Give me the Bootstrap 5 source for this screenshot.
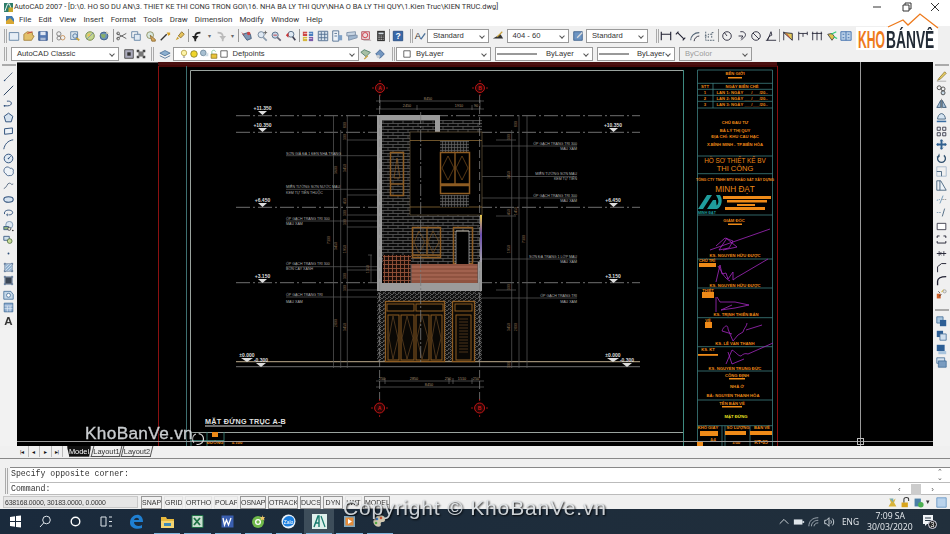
<!DOCTYPE html>
<html lang="vi"><head><meta charset="utf-8"><title>AutoCAD 2007</title>
<link rel="stylesheet" href="https://cdn.jsdelivr.net/npm/bootstrap@5.3.0/dist/css/bootstrap.min.css">
<style>
html,body{margin:0;height:534px;width:950px;overflow:hidden;background:#f0f0f0}
.acad{width:950px;height:534px;position:relative;font-family:Roboto,"Open Sans",sans-serif;color:#222;filter:blur(.4px);overflow:hidden}
.ttl{height:14px;background:#fff;font-size:7.4px;line-height:14px;white-space:nowrap;color:#333}
.ttl svg{width:9px;height:9px;margin:0 1px 0 4px;flex:none}
.wctl{margin-left:auto;display:flex}
.wctl svg{width:29px;height:14px;margin:0}
.mnu{height:12px;background:#fff;font-size:7.9px;line-height:12px;color:#333}
.mnu svg{width:10px;height:10px;margin:0 4px 0 5px;flex:none}
.mnu span{margin-right:7.2px}
.tb1{height:19px;background:#f0f0f0;padding-left:4px;white-space:nowrap}
.tb2{height:17px;background:#f0f0f0;padding-left:4px;white-space:nowrap}
.grp{width:3px;height:14px;border-left:1px solid #aaa;border-right:1px solid #aaa;flex:none}
.sepv{width:1px;height:13px;background:#999;margin:0 1px;flex:none}
.tbi{width:14.5px;height:14px;flex:none;display:flex;align-items:center;justify-content:center}
.tbi svg{width:12px;height:12px}
.tn{width:12px}
.tdd{width:9px;flex:none;font-size:6px;text-align:center;color:#666}
.cbo{height:14px;border:1px solid #9a9a9a;background:#fff;font:7.6px/12px "Liberation Sans",sans-serif;padding-left:5px;display:flex;align-items:center;flex:none;position:relative;white-space:nowrap;overflow:hidden;color:#333}
.cbo::after{content:"";position:absolute;right:4px;top:4px;width:4px;height:4px;border-right:1px solid #555;border-bottom:1px solid #555;transform:rotate(45deg)}
.cbo.off{background:#f0f0f0;color:#9a9a9a}
.cbo svg{width:10px;height:10px;flex:none}
.cb-a{width:62px}.cb-b{width:62px}.cb-c{width:62px}.cb-d{width:108px}.cb-e{width:186px}.cb-f{width:95px;margin-left:1.500px}.cb-g{width:98px;padding-left:1px}.cb-h{width:78px;padding-left:1px}.cb-i{width:73px}
.cbo svg.lnk{width:40px;margin-right:9px}.cbo svg.lnk2{width:30px;margin-right:8px}
.tb1 .cbo+.tbi{margin-left:2px;margin-right:1px}
.main{height:384px}
.side{width:17px;flex:none;background:#f2f2f2;position:relative}
.side .tbs{background:#f0f0f0;display:flex;flex-direction:column;align-items:center}
.side .tbi{height:13.6px;width:16px}
.side svg{width:11px;height:11px}
.atext{font:700 11.5px/13.6px "Liberation Sans",sans-serif;color:#333}
.gripH{height:2px;width:14px;border-top:1px solid #aaa;border-bottom:1px solid #aaa;margin:2px 0 4px;flex:none}
.cvs{width:916px;flex:none;background:#000;display:block}
.tabsr{height:12px;background:#f0f0f0;padding-left:17px}
.navb{width:11.500px;height:11px;font-size:6px;line-height:11px;text-align:center;color:#111;border-right:1px solid #bbb;flex:none}
.tabz{font:7.400px/11px "Liberation Sans",sans-serif;position:relative;text-align:center;flex:none;height:11px;color:#333;z-index:0}
.tabz::before{content:"";position:absolute;inset:0;border:1px solid #555;border-top:0;transform:skewX(-14deg);z-index:-1}
.tabz.on{color:#fff}
.tabz.on::before{background:#111;transform:none;clip-path:polygon(0 0,100% 0,92% 100%,10% 100%)}
.tab-m{width:24px;margin-right:1px}.tab-l{width:29px;margin-right:1px}.tab-l2{width:30px}
.gapr{height:9px;background:#f0f0f0;border-top:1px solid #888;position:relative}
.gapr::before{content:"";display:block;height:2px;background:#f0f0f0}
.cmdr{height:28px;background:#f0f0f0}
.cmdg{width:10px;flex:none;position:relative}
.cmdg::before{content:"";position:absolute;left:5px;top:1px;bottom:1px;width:3px;border-left:1px solid #aaa;border-right:1px solid #aaa}
.cmdw{flex:1;background:#fff;border-top:1px solid #888;border-bottom:1px solid #bbb;font:8.200px/12px "Liberation Mono",monospace;color:#333}
.cmdl{height:13.500px;padding-left:1px;position:relative;white-space:pre}
.cmdl+.cmdl{border-top:1px solid #bbb}
.scv{position:absolute;right:6px;top:1px;width:9px;font:7px/6px "Liberation Sans";color:#555;text-align:center}
.sch{position:absolute;right:16px;top:1px;width:36px;height:11px;display:flex;justify-content:space-between;font:8px/11px "Liberation Sans";color:#555}
.sch b{width:10px;height:11px;background:#ccc;display:block}
.stb{height:14px;background:#f0f0f0;font:7px/12px "Liberation Sans",sans-serif;padding-left:3px;color:#333}
.crd{width:135px;height:12px;background:#e6e6e6;border:1px solid #c8c8c8;padding-left:1px;flex:none;margin-right:3px;white-space:nowrap;overflow:hidden;font-size:6.900px;letter-spacing:-.15px}
.sbt{height:13px;border:1px solid #999;text-align:center;flex:none;margin-right:2px;overflow:hidden;white-space:nowrap}
.sbt.up{border-color:#e4e4e4}
.s1{width:21px}.s2{width:19px}.s3{width:27px}.s4{width:24px}.s5{width:26px}.s6{width:30px}.s7{width:21px}.s8{width:20px}.s9{width:17px}.s10{width:26px}
.tray{margin-left:auto;margin-right:3px;gap:2px}
.tray svg{width:11px;height:11px;flex:none}
.ddn{font-size:7px;color:#333}
.tskb{height:25px;background:linear-gradient(90deg,#1a2a3c,#1d2c3b 50%,#212f3c);color:#e7ebef;position:relative}
.tski{width:30.400px;height:25px;flex:none;display:flex;align-items:center;justify-content:center;position:relative}
.tski svg{width:15px;height:15px}
.tski.run::after{content:"";position:absolute;left:2px;right:2px;bottom:0;height:1.500px;background:#7fb6dd}
.tski.act{background:#3d4d5a}
.clk{font:8.600px/10.500px "Open Sans",sans-serif;text-align:right;width:42px;margin-right:12px;flex:none}
.try{font:8.400px/25px "Open Sans",sans-serif;flex:none}
.try svg{width:12px;height:12px;margin-right:3px}
.ntf{margin-right:12px}
.lgo{position:absolute;left:855px;top:12px;width:85px;height:39px}
.wm1,.wm2{position:absolute;color:#dfe3e6;white-space:nowrap;font-family:"Liberation Sans",sans-serif;text-shadow:1px 1px 2px #000;opacity:.9}
.wm1{left:85px;top:421px;font-size:17.200px;line-height:24px;letter-spacing:.35px;-webkit-text-stroke:.3px #dfe3e6}
.wm2{left:343px;top:496px;font-size:21px;line-height:24px;letter-spacing:.85px}
svg text{font-family:"Liberation Sans",sans-serif}
</style></head><body>
<svg width="0" height="0" class="position-absolute">
<defs>
<symbol id="nw" viewBox="0 0 14 14"><path d="M1.5 3h11v9h-11z" fill="#e6eef6" stroke="#5b7da0"/></symbol>
<symbol id="op" viewBox="0 0 14 14"><path d="M1 12V5l4-3 6 1v3l2 1-3 5z" fill="#e2c06a" stroke="#a4813a"/><path d="M5 4l6-2" stroke="#c33"/></symbol>
<symbol id="sv" viewBox="0 0 14 14"><path d="M2 2h10v10H2z" fill="#5579b2" stroke="#2f4f86"/><path d="M4 2h6v4H4z" fill="#dfe6f2"/><path d="M4 9h6v3H4z" fill="#a9b9d4"/></symbol>
<symbol id="pr" viewBox="0 0 14 14"><circle cx="4.5" cy="4.5" r="2.5" fill="none" stroke="#777"/><circle cx="9" cy="9" r="2.6" fill="none" stroke="#c28b52"/><circle cx="4.5" cy="9.5" r="2.2" fill="none" stroke="#777"/></symbol>
<symbol id="pv" viewBox="0 0 14 14"><path d="M2 2h8v9H2z" fill="#dfe8f0" stroke="#5b7da0"/><path d="M7 8l5 4" stroke="#c9a23a" stroke-width="2"/><circle cx="7" cy="7" r="2.6" fill="#cfe2f3" stroke="#4a6f96"/></symbol>
<symbol id="pl" viewBox="0 0 14 14"><circle cx="7" cy="7" r="5" fill="#c3d68e" stroke="#6f8240"/><circle cx="6" cy="6" r="2" fill="#e8c35c"/><path d="M3 11l8-8" stroke="#7d94b4"/></symbol>
<symbol id="gb" viewBox="0 0 14 14"><circle cx="7" cy="7" r="4.6" fill="#6c92b8" stroke="#3a5b80"/><path d="M3 5h6l-1 4H5z" fill="#8ab066"/><path d="M9 1l4 3-3 1z" fill="#d7d3bb"/></symbol>
<symbol id="ct" viewBox="0 0 14 14"><path d="M1 4l11 6M1 10l11-6" stroke="#555"/><circle cx="2.5" cy="4" r="1.6" fill="none" stroke="#555"/><circle cx="2.5" cy="10" r="1.6" fill="none" stroke="#555"/></symbol>
<symbol id="cp" viewBox="0 0 14 14"><path d="M2 2h7v7H2z" fill="#f7f7f7" stroke="#5b7da0"/><path d="M5 5h7v7H5z" fill="#dfe9f3" stroke="#5b7da0"/></symbol>
<symbol id="ps" viewBox="0 0 14 14"><circle cx="6" cy="6" r="4" fill="#d8e8e0" stroke="#8b8b5a"/><path d="M6 6l6 5v2H8z" fill="#d6a85c" stroke="#8f6d33"/></symbol>
<symbol id="mp" viewBox="0 0 14 14"><path d="M2 12L9 5" stroke="#333" stroke-width="1.6"/><path d="M9 3h4v2l-2 2z" fill="#d8a028"/></symbol>
<symbol id="br" viewBox="0 0 14 14"><path d="M2 12l4-2-2-2z" fill="#caa02e"/><path d="M5 7l4-5 3 3-4 4z" fill="#e5c35c" stroke="#8c6e2a"/></symbol>
<symbol id="un" viewBox="0 0 14 14"><path d="M5 13V7c0-3 3-4 6-4" fill="none" stroke="#222" stroke-width="2"/><path d="M1 7h8l-4 5z" fill="#222"/></symbol>
<symbol id="re" viewBox="0 0 14 14"><path d="M9 13V7C9 4 6 3 3 3" fill="none" stroke="#bbb" stroke-width="2"/><path d="M13 7H5l4 5z" fill="#bbb"/></symbol>
<symbol id="pn" viewBox="0 0 14 14"><path d="M2 5l5 7 5-2-1-5-3-2z" fill="#8098b5" stroke="#3e5674"/><circle cx="9" cy="4" r="2" fill="#c44"/><path d="M1 3l3 3" stroke="#c44"/></symbol>
<symbol id="zm" viewBox="0 0 14 14"><circle cx="6" cy="5.5" r="3.6" fill="#dfe9f3" stroke="#6a7f96"/><path d="M8.5 8.5l4 4" stroke="#8a9bad" stroke-width="2"/><path d="M11 1v4M9 3h4" stroke="#666"/></symbol>
<symbol id="zw" viewBox="0 0 14 14"><circle cx="6" cy="6" r="3.6" fill="#c7d7e8" stroke="#4f6680"/><path d="M8.5 8.5l4 4" stroke="#667" stroke-width="2"/><path d="M4 6h4" stroke="#c33"/></symbol>
<symbol id="zp" viewBox="0 0 14 14"><circle cx="7" cy="5" r="3.4" fill="#dfe9f3" stroke="#4f6680"/><path d="M9 8l3 4" stroke="#445" stroke-width="2"/><path d="M1 6l3-3v6z" fill="#c33"/></symbol>
<symbol id="pp" viewBox="0 0 14 14"><path d="M1 2h5v5H1z" fill="#c44"/><path d="M8 2h5v5H8z" fill="#4a7fbf"/><path d="M1 8h5v5H1z" fill="#d5b63b"/><path d="M8 8h5v5H8z" fill="#7a5aa8"/><path d="M2 4h10M2 10h10" stroke="#fff" stroke-width=".7"/></symbol>
<symbol id="dc" viewBox="0 0 14 14"><path d="M1.5 1.5h11v11h-11z" fill="#d9e4ef" stroke="#4d6b8c"/><path d="M5 2v10M9 2v10M2 5h10M2 9h10" stroke="#4d6b8c"/></symbol>
<symbol id="tp" viewBox="0 0 14 14"><path d="M2 1h7v12H2z" fill="#eef3f8" stroke="#4d6b8c"/><path d="M4 4h3M4 7h3" stroke="#4d6b8c"/><path d="M8 6h5v6H8z" fill="#7fa1c6"/></symbol>
<symbol id="sh" viewBox="0 0 14 14"><path d="M1 3l10-1v4L1 7z" fill="#c7d4e2" stroke="#7a8ea6"/><path d="M3 7l10-1v3L3 12z" fill="#9fb6cf" stroke="#7a8ea6"/></symbol>
<symbol id="mk" viewBox="0 0 14 14"><path d="M2 2h9v9H2z" fill="#eadadd" stroke="#b24a55"/><circle cx="6" cy="6" r="3" fill="none" stroke="#d02c38"/><path d="M4 12h9" stroke="#b4a7ab"/></symbol>
<symbol id="ca" viewBox="0 0 14 14"><path d="M2.5 1h9v12h-9z" fill="#333"/><path d="M4 3h6v2H4z" fill="#cfd8df"/><path d="M4 7h1.5M6.5 7H8M9 7h1M4 9h1.5M6.5 9H8M9 9h1M4 11h1.500M6.5 11H8M9 11h1" stroke="#ddd"/></symbol>
<symbol id="hp" viewBox="0 0 14 14"><path d="M1.500 1.500h11v11h-11z" fill="#3868a8" stroke="#254a80"/><text x="7" y="11" text-anchor="middle" font-size="10" font-weight="700" fill="#fff">?</text></symbol>
<symbol id="ts" viewBox="0 0 14 14"><text x="1" y="11" font-size="11" fill="#333" font-family="Liberation Serif">A</text><path d="M8 11l5-7" stroke="#4a6f96" stroke-width="1.5"/></symbol>
<symbol id="ds" viewBox="0 0 14 14"><path d="M1 10h12L10 5z" fill="#333"/><path d="M6 8l6-6" stroke="#c9a23a" stroke-width="1.400"/></symbol>
<symbol id="dd" viewBox="0 0 14 14"><path d="M2 2h10v10H2z" fill="#6d95c3" stroke="#3c5f8a"/><path d="M6 9l6-6" stroke="#ddd" stroke-width="1.500"/></symbol>
<symbol id="d1" viewBox="0 0 14 14"><path d="M1.500 2v10M12.500 2v10M1.500 5h11" fill="none" stroke="#223" stroke-width="1.300"/></symbol>
<symbol id="d2" viewBox="0 0 14 14"><path d="M1 5l3-3M9 12l3-3M3 3l7 7" fill="none" stroke="#223" stroke-width="1.300"/></symbol>
<symbol id="d3" viewBox="0 0 14 14"><path d="M2 12c0-5 4-9 10-9" fill="none" stroke="#567" stroke-width="1.300"/><path d="M6 13c0-3 3-6 6-6" fill="none" stroke="#223"/></symbol>
<symbol id="d4" viewBox="0 0 14 14"><path d="M2 2v10h10M5 9V5h3M9 9V3h3M1 7h3" fill="none" stroke="#456" stroke-dasharray="2 1"/></symbol>
<symbol id="d5" viewBox="0 0 14 14"><circle cx="7" cy="7" r="5" fill="none" stroke="#223"/><path d="M7 7L4 3" stroke="#223"/></symbol>
<symbol id="d6" viewBox="0 0 14 14"><path d="M5 2h3c3 1 4 4 2 6L6 12M3 7h5l-2 3" fill="none" stroke="#223"/></symbol>
<symbol id="d7" viewBox="0 0 14 14"><circle cx="7" cy="7" r="5" fill="none" stroke="#223"/><path d="M3.500 3.500l7 7" stroke="#223"/></symbol>
<symbol id="d8" viewBox="0 0 14 14"><path d="M1 12h12M3 12c0-3 2-5 5-6L7 2 3 12" fill="none" stroke="#223"/></symbol>
<symbol id="d9" viewBox="0 0 14 14"><path d="M2 2v10M2 3l10 1v8z" fill="#e2c85a" stroke="#223"/><path d="M5 4l4 5" stroke="#c33"/></symbol>
<symbol id="da" viewBox="0 0 14 14"><path d="M2 2v10M2 4h10M12 2v4M7 4v4" fill="none" stroke="#223"/></symbol>
<symbol id="db" viewBox="0 0 14 14"><path d="M2 2v10M7 2v10M12 2v10M1 4h12" fill="none" stroke="#223"/></symbol>
<symbol id="dq" viewBox="0 0 14 14"><path d="M2 5l5 7 3-4-3-4z" fill="#e2c14a" stroke="#444"/><path d="M6 5l6-3M9 8l4 2" stroke="#3c7" stroke-width="1.400"/></symbol>
<symbol id="dt" viewBox="0 0 14 14"><path d="M1 2h12v10H1z" fill="#bcd1e8" stroke="#3869a8"/><path d="M7 2v10M3 5h2M3 9h2M9 5h2M9 9h2" stroke="#3869a8"/></symbol>
<symbol id="lay" viewBox="0 0 14 14"><path d="M1 6l6-3 6 3-6 3z" fill="#8db0d0" stroke="#54769a"/><path d="M1 9l6 3 6-3" fill="none" stroke="#54769a"/></symbol>
<symbol id="bk" viewBox="0 0 14 14"><path d="M2 2h10v10H2z" fill="#aab" stroke="#444"/><path d="M5 5h4v4H5z" fill="#333"/></symbol>
<symbol id="bl" viewBox="0 0 14 14"><path d="M2 2h3v3H2zM9 2h3v3H9zM2 9h3v3H2zM9 9h3v3H9z" fill="#444"/><path d="M4 4h6v6H4z" fill="#777"/></symbol>
<symbol id="bulb" viewBox="0 0 14 14"><circle cx="7" cy="5.500" r="3.800" fill="#fdf3a6" stroke="#a99436"/><path d="M5.500 10h3v2.500h-3z" fill="#b7b7b7"/></symbol>
<symbol id="sun" viewBox="0 0 14 14"><circle cx="7" cy="7" r="4.600" fill="#f0d52b" stroke="#77701e"/></symbol>
<symbol id="frz" viewBox="0 0 14 14"><circle cx="6" cy="5.500" r="4" fill="#a7bfd1" stroke="#627f93"/><path d="M7 10h6V5" fill="#cfdde6"/></symbol>
<symbol id="lck" viewBox="0 0 14 14"><path d="M3 7h8v6H3z" fill="#e8c53a" stroke="#89701c"/><path d="M4 7V4c0-3 5-3 5 0" fill="none" stroke="#6b8"/></symbol>
<symbol id="sq" viewBox="0 0 14 14"><path d="M2.500 2.500h9v9h-9z" fill="#fff" stroke="#333"/></symbol>
<symbol id="lw" viewBox="0 0 14 14"><path d="M1 5l4-3 7 3-5 5z" fill="#a7c0a5" stroke="#4d7a67"/><path d="M5 13l4-4" stroke="#c9a23a" stroke-width="1.500"/></symbol>
<symbol id="lw2" viewBox="0 0 14 14"><path d="M2 7l5-5 5 5-5 5z" fill="#7396bf" stroke="#3e6090"/><circle cx="5" cy="10" r="2" fill="#c9cdd1"/></symbol>
<symbol id="l1" viewBox="0 0 14 14"><path d="M2 12L12 2" stroke="#5c6e85" stroke-width="1.200"/><circle cx="2" cy="12" r="1" fill="#2d4f7a"/></symbol>
<symbol id="l2" viewBox="0 0 14 14"><path d="M1 13L13 1" stroke="#223a5a" stroke-width="1.200"/></symbol>
<symbol id="l3" viewBox="0 0 14 14"><path d="M1 10h5c6 0 6-6 1-6h-2" fill="none" stroke="#2d4f7a" stroke-width="1.200"/><circle cx="2" cy="10" r="1" fill="#2d4f7a"/></symbol>
<symbol id="l4" viewBox="0 0 14 14"><path d="M7 1.500l5.500 4-2 7h-7l-2-7z" fill="#d5e2ef" stroke="#2d4f7a" stroke-width="1.200"/></symbol>
<symbol id="l5" viewBox="0 0 14 14"><path d="M2 3.500l10-1v7l-10 1z" fill="#eef3f8" stroke="#2d4f7a" stroke-width="1.200"/></symbol>
<symbol id="l6" viewBox="0 0 14 14"><path d="M1 13C2 7 6 2 13 1" fill="none" stroke="#2d4f7a" stroke-width="1.200"/></symbol>
<symbol id="l7" viewBox="0 0 14 14"><circle cx="7" cy="7" r="5.500" fill="#dfe9f3" stroke="#2d4f7a" stroke-width="1.200"/><path d="M7 7l3-3" stroke="#2d4f7a"/><circle cx="7" cy="7" r="1" fill="#2d4f7a"/></symbol>
<symbol id="l8" viewBox="0 0 14 14"><path d="M3 2c3-2 5 0 6 1 3-1 5 2 4 4 1 3-2 6-4 5-2 1-5 0-5-2C1 9 0 5 3 2z" fill="#eef3f8" stroke="#2d4f7a"/></symbol>
<symbol id="l9" viewBox="0 0 14 14"><path d="M1 11c4-1 4-7 7-7 3 0 2 3 5 1" fill="none" stroke="#5c6e85" stroke-width="1.200"/></symbol>
<symbol id="la" viewBox="0 0 14 14"><ellipse cx="7" cy="7" rx="6" ry="3.500" fill="#d5e2ef" stroke="#2d4f7a" stroke-width="1.300"/></symbol>
<symbol id="lb" viewBox="0 0 14 14"><path d="M2 9C1 5 5 4 7 4c4 0 6 2 5 4-1 2-3 2-5 2" fill="none" stroke="#2d4f7a" stroke-width="1.200"/><path d="M6 8l-2 2 2 2z" fill="#2d4f7a"/></symbol>
<symbol id="lc" viewBox="0 0 14 14"><circle cx="8" cy="5" r="4.500" fill="#dce7f1" stroke="#6988a8"/><path d="M1 7h6v4H1z" fill="#8fb27f" stroke="#2d4f7a"/><circle cx="8" cy="10" r="2" fill="#e3e7c5" stroke="#445"/><circle cx="12.500" cy="12" r="1" fill="#222"/></symbol>
<symbol id="ld" viewBox="0 0 14 14"><path d="M1 3h7v5H1z" fill="#cfdfe8" stroke="#2d4f7a"/><circle cx="8.500" cy="9" r="3" fill="#cadc9c" stroke="#4d6d3a"/></symbol>
<symbol id="le" viewBox="0 0 14 14"><circle cx="7" cy="7" r="1.200" fill="#2d4f7a"/></symbol>
<symbol id="lf" viewBox="0 0 14 14"><path d="M2.500 1v12M11.500 1v12M1 2.500h12M1 11.500h12" stroke="#2d4f7a"/><path d="M3 3h8v8H3z" fill="#8fb0d0"/><path d="M3 7l4-4M3 11l8-8M7 11l4-4" stroke="#dfe9f3"/></symbol>
<symbol id="lg" viewBox="0 0 14 14"><path d="M2.500 1v12M11.500 1v12M1 2.500h12M1 11.500h12" stroke="#2d4f7a"/><path d="M3 3h8v8H3z" fill="#3a4656"/></symbol>
<symbol id="lh" viewBox="0 0 14 14"><path d="M1 3h9l3 4v6H1z" fill="#c4d7e8" stroke="#3d6a96"/><circle cx="7" cy="8" r="2.500" fill="#fff" stroke="#3d6a96"/></symbol>
<symbol id="li" viewBox="0 0 14 14"><path d="M1.500 1.500h11v11h-11z" fill="#8eacd0" stroke="#3d6a96"/><path d="M2 5h10M2 8.500h10M5.500 5v7M9 5v7" stroke="#dfe9f3"/></symbol>
<symbol id="r1" viewBox="0 0 14 14"><path d="M2 12l2-3 7-8 2 2-7 7z" fill="#e9cd63" stroke="#8a7632"/><path d="M1 13h12" stroke="#bbb" stroke-width="1.500"/></symbol>
<symbol id="r2" viewBox="0 0 14 14"><circle cx="4" cy="3.500" r="2.500" fill="none" stroke="#333"/><circle cx="9" cy="5" r="2.500" fill="none" stroke="#333"/><circle cx="9" cy="10" r="2.500" fill="#c7d8e5" stroke="#333"/></symbol>
<symbol id="r3" viewBox="0 0 14 14"><path d="M7 1v12" stroke="#777"/><path d="M6 3L1 12h5zM8 3l5 9H8z" fill="#a7c0d6" stroke="#30506e"/></symbol>
<symbol id="r4" viewBox="0 0 14 14"><path d="M2 9c0-3 2-7 5-7s5 4 5 7z" fill="#d5e4f1" stroke="#30506e"/><path d="M1 12h12" stroke="#3a6ea3" stroke-width="2"/></symbol>
<symbol id="r5" viewBox="0 0 14 14"><path d="M1.500 1.500h4v4h-4zM8.500 1.500h4v4h-4zM1.500 8.500h4v4h-4zM8.500 8.500h4v4h-4z" fill="#eef3f8" stroke="#223"/></symbol>
<symbol id="r6" viewBox="0 0 14 14"><path d="M7 1v12M1 7h12" stroke="#30608f" stroke-width="2.400"/><path d="M5 3l2-2 2 2M5 11l2 2 2-2M3 5L1 7l2 2M11 5l2 2-2 2" fill="none" stroke="#30608f"/></symbol>
<symbol id="r7" viewBox="0 0 14 14"><path d="M4 3a5 5 0 1 0 6 0" fill="none" stroke="#30506e" stroke-width="1.700"/><path d="M4 1v4H1" fill="none" stroke="#30506e"/></symbol>
<symbol id="r8" viewBox="0 0 14 14"><path d="M1 1h12v12H1z" fill="none" stroke="#9db3c8"/><path d="M1 7h6v6" fill="#eaf0f6" stroke="#30506e"/></symbol>
<symbol id="r9" viewBox="0 0 14 14"><path d="M1 1h5l7 12H1z" fill="#eef3f8" stroke="#30506e"/><path d="M5 1v12" stroke="#30506e"/></symbol>
<symbol id="ra" viewBox="0 0 14 14"><path d="M1 8l4-1" stroke="#5a8ab0" stroke-dasharray="2 1"/><path d="M9 2L5 12" stroke="#5a8ab0"/><path d="M8 7h5" stroke="#888" stroke-dasharray="2 1"/></symbol>
<symbol id="rb" viewBox="0 0 14 14"><path d="M1 7h6" stroke="#6a8aa8" stroke-dasharray="2 1"/><path d="M11 2L8 12" stroke="#30506e"/></symbol>
<symbol id="rc" viewBox="0 0 14 14"><path d="M1.500 3h11v8h-11z" fill="#fff" stroke="#223"/></symbol>
<symbol id="rd" viewBox="0 0 14 14"><path d="M1.500 5V2.500h3M9.500 2.500h3V5M1.500 9v2.500h11V9" fill="none" stroke="#223" stroke-width="1.200"/></symbol>
<symbol id="re2" viewBox="0 0 14 14"><path d="M1 7h12" stroke="#223" stroke-width="1.200"/><path d="M4 4v6M7 5l-2 2 2 2M10 4v6" fill="none" stroke="#223"/></symbol>
<symbol id="rf" viewBox="0 0 14 14"><path d="M2 13V6l5-4h6" fill="none" stroke="#223" stroke-width="1.200"/></symbol>
<symbol id="rg" viewBox="0 0 14 14"><path d="M2 13V8c0-4 4-6 11-6" fill="none" stroke="#223" stroke-width="1.700"/></symbol>
<symbol id="rh" viewBox="0 0 14 14"><path d="M1 6h5v6H1z" fill="#d0602a"/><path d="M3 3l2 2M4 9l3-2" stroke="#333"/><path d="M7 4l3-3" stroke="#e2c14a" stroke-width="1.500"/><circle cx="11" cy="3" r="2" fill="#e6e6e6" stroke="#999"/></symbol>
<symbol id="o1" viewBox="0 0 14 14"><path d="M1 1h8v8H1z" fill="#a9c5de" stroke="#426c96"/><path d="M5 5h8v8H5z" fill="#2e5f95"/></symbol>
<symbol id="o2" viewBox="0 0 14 14"><path d="M1 1h8v8H1z" fill="#2e5f95"/><path d="M5 5h8v8H5z" fill="#d2e0ee" stroke="#426c96"/></symbol>
<symbol id="o3" viewBox="0 0 14 14"><path d="M1 1h10v8H1z" fill="#2e5f95"/><path d="M3 9h10v4H3z" fill="#a9c5de"/></symbol>
<symbol id="o4" viewBox="0 0 14 14"><path d="M1 1h10v7H1z" fill="#d2e0ee" stroke="#426c96"/><path d="M3 5h10v8H3z" fill="#7a9cc0" stroke="#426c96"/></symbol>
</defs></svg>

<div class="acad d-flex flex-column">
<div class="ttl d-flex align-items-center"><svg viewBox="0 0 10 10"><rect width="10" height="10" fill="#2d7d6a"/><path d="M1 9L4 1h2l3 8" fill="none" stroke="#fff"/><rect x="5" y="5" width="5" height="5" fill="#c8a82c"/></svg><span>AutoCAD 2007 - [D:\0. HO SO DU AN\3. THIET KE THI CONG TRON GOI\16. NHA BA LY THI QUY\NHA O BA LY THI QUY\1.Kien Truc\KIEN TRUC.dwg]</span>
<div class="wctl"><svg viewBox="0 0 29 14"><path d="M10 7h8" stroke="#333"/></svg><svg viewBox="0 0 29 14"><path d="M11 5h6v6h-6zM13 5V3h6v6h-2" fill="none" stroke="#333"/></svg><svg viewBox="0 0 29 14"><path d="M10 3l8 8M18 3l-8 8" stroke="#333"/></svg></div></div>
<div class="mnu d-flex align-items-center"><svg viewBox="0 0 10 10"><path d="M1 1h6l2 3v5H1z" fill="#3e7ab0"/><path d="M1 6l4-3 4 4v2H1z" fill="#d9a832"/></svg><span>File</span><span>Edit</span><span>View</span><span>Insert</span><span>Format</span><span>Tools</span><span>Draw</span><span>Dimension</span><span>Modify</span><span>Window</span><span>Help</span></div>

<div class="tb1 d-flex align-items-center">
<span class="grp"></span>
<span class="tbi"><svg><use href="#nw"/></svg></span><span class="tbi"><svg><use href="#op"/></svg></span><span class="tbi"><svg><use href="#sv"/></svg></span><span class="sepv"></span>
<span class="tbi"><svg><use href="#pr"/></svg></span><span class="tbi"><svg><use href="#pv"/></svg></span><span class="tbi"><svg><use href="#pl"/></svg></span><span class="tbi"><svg><use href="#gb"/></svg></span><span class="sepv"></span>
<span class="tbi"><svg><use href="#ct"/></svg></span><span class="tbi"><svg><use href="#cp"/></svg></span><span class="tbi"><svg><use href="#ps"/></svg></span><span class="tbi"><svg><use href="#mp"/></svg></span><span class="tbi"><svg><use href="#br"/></svg></span><span class="sepv"></span>
<span class="tbi"><svg><use href="#un"/></svg></span><span class="tdd">▾</span><span class="tbi"><svg><use href="#re"/></svg></span><span class="tdd">▾</span><span class="sepv"></span>
<span class="tbi"><svg><use href="#pn"/></svg></span><span class="tbi"><svg><use href="#zm"/></svg></span><span class="tbi"><svg><use href="#zw"/></svg></span><span class="tbi"><svg><use href="#zp"/></svg></span><span class="sepv"></span>
<span class="tbi"><svg><use href="#pp"/></svg></span><span class="tbi"><svg><use href="#dc"/></svg></span><span class="tbi"><svg><use href="#tp"/></svg></span><span class="tbi"><svg><use href="#sh"/></svg></span><span class="tbi"><svg><use href="#mk"/></svg></span><span class="tbi"><svg><use href="#ca"/></svg></span><span class="sepv"></span>
<span class="tbi"><svg><use href="#hp"/></svg></span>
<span class="grp ms-1"></span>
<span class="tbi"><svg><use href="#ts"/></svg></span>
<span class="cbo cb-a">Standard</span>
<span class="tbi"><svg><use href="#ds"/></svg></span>
<span class="cbo cb-b">404 - 60</span>
<span class="tbi"><svg><use href="#dd"/></svg></span>
<span class="cbo cb-c">Standard</span>
<span class="grp ms-2"></span>
<span class="tbi"><svg><use href="#d1"/></svg></span><span class="tbi"><svg><use href="#d2"/></svg></span><span class="tbi"><svg><use href="#d3"/></svg></span><span class="tbi"><svg><use href="#d4"/></svg></span><span class="sepv"></span>
<span class="tbi"><svg><use href="#d5"/></svg></span><span class="tbi"><svg><use href="#d6"/></svg></span><span class="tbi"><svg><use href="#d7"/></svg></span><span class="tbi"><svg><use href="#d8"/></svg></span><span class="sepv"></span>
<span class="tbi"><svg><use href="#d9"/></svg></span><span class="tbi"><svg><use href="#da"/></svg></span><span class="tbi"><svg><use href="#db"/></svg></span>
<span class="tbi"><svg><use href="#dq"/></svg></span><span class="tbi"><svg><use href="#dt"/></svg></span>
</div>

<div class="tb2 d-flex align-items-center">
<span class="grp"></span>
<span class="cbo cb-d ms-1">AutoCAD Classic</span>
<span class="tbi tn ms-1"><svg><use href="#bk"/></svg></span><span class="tbi tn"><svg><use href="#bl"/></svg></span>
<span class="grp ms-1"></span>
<span class="tbi ms-1"><svg><use href="#lay"/></svg></span>
<span class="cbo cb-e"><svg><use href="#bulb"/></svg><svg><use href="#sun"/></svg><svg><use href="#frz"/></svg><svg><use href="#lck"/></svg><svg><use href="#sq"/></svg><span class="ms-1">Defpoints</span></span>
<span class="tbi"><svg><use href="#lw"/></svg></span><span class="tbi"><svg><use href="#lw2"/></svg></span>
<span class="grp ms-1"></span>
<span class="cbo cb-f"><svg><use href="#sq"/></svg><span class="ms-1">ByLayer</span></span>
<span class="cbo cb-g ms-1"><svg class="lnk" viewBox="0 0 40 10"><path d="M0 5h40" stroke="#333"/></svg><span>ByLayer</span></span>
<span class="cbo cb-h ms-1"><svg class="lnk2" viewBox="0 0 30 10"><path d="M0 5h30" stroke="#333"/></svg><span>ByLayer</span></span>
<span class="cbo off cb-i ms-1">ByColor</span>
</div>

<div class="main d-flex">
<div class="side"><div class="tbs"><span class="gripH"></span>
<span class="tbi"><svg><use href="#l1"/></svg></span><span class="tbi"><svg><use href="#l2"/></svg></span><span class="tbi"><svg><use href="#l3"/></svg></span><span class="tbi"><svg><use href="#l4"/></svg></span><span class="tbi"><svg><use href="#l5"/></svg></span><span class="tbi"><svg><use href="#l6"/></svg></span><span class="tbi"><svg><use href="#l7"/></svg></span><span class="tbi"><svg><use href="#l8"/></svg></span><span class="tbi"><svg><use href="#l9"/></svg></span><span class="tbi"><svg><use href="#la"/></svg></span><span class="tbi"><svg><use href="#lb"/></svg></span><span class="tbi"><svg><use href="#lc"/></svg></span><span class="tbi"><svg><use href="#ld"/></svg></span><span class="tbi"><svg><use href="#le"/></svg></span><span class="tbi"><svg><use href="#lf"/></svg></span><span class="tbi"><svg><use href="#lg"/></svg></span><span class="tbi"><svg><use href="#lh"/></svg></span><span class="tbi"><svg><use href="#li"/></svg></span><span class="tbi atext">A</span>
</div></div>

<svg class="cvs" width="916" height="384" viewBox="17 62 916 384">
<defs>
<pattern id="bri" width="10" height="6" patternUnits="userSpaceOnUse"><rect width="10" height="6" fill="#0a0a0a"/><path d="M0 .5h10M0 3.500h10M3 .5v3M8 3.500v3" stroke="#5c5c5c" stroke-width=".8"/></pattern>
<pattern id="sto" width="5" height="4" patternUnits="userSpaceOnUse"><rect width="5" height="4" fill="#111"/><path d="M0 1l2 2 2-2M3 0l2 1M0 3l1 1" stroke="#777" stroke-width=".7" fill="none"/></pattern>
<pattern id="hat" width="6" height="3" patternUnits="userSpaceOnUse"><rect width="6" height="3" fill="#111"/><path d="M0 .5h6M1.500 0v3M4.500 0v3" stroke="#666" stroke-width=".7"/></pattern>
<pattern id="lat" width="4" height="4" patternUnits="userSpaceOnUse"><rect width="4" height="4" fill="#1a0d08"/><path d="M0 .5h4M.5 0v4" stroke="#94523a" stroke-width=".9"/></pattern>
<linearGradient id="grd" x1="0" y1="0" x2="0" y2="1"><stop offset="0" stop-color="#e8c84a"/><stop offset=".4" stop-color="#6a4bb0"/><stop offset="1" stop-color="#aaa"/></linearGradient>
</defs>
<path d="M17 62.500h141" stroke="#666"/>
<rect x="158" y="62" width="619" height="3" fill="#4a1010"/>
<path d="M158.500 66H777.500V446M158.500 66V446" fill="none" stroke="#8a1010"/>
<path d="M186.500 66V446" stroke="#3d6f70"/>
<path d="M190.500 70.500H683.500V432.500H190.500Z" fill="none" stroke="#9aa39e"/>
<path d="M683.500 70V446" stroke="#3d8a80"/>
<g stroke="#8a8a8a" stroke-width=".8" stroke-dasharray="14 3 2 3">
<path d="M236 115.700H640M236 132.300H640M236 207.300H640M236 282.700H640"/></g>
<path d="M236 361.700H640" stroke="#9a8b72" stroke-width="1.200"/><path d="M236 366.700H640" stroke="#8a8a8a" stroke-width=".8"/>
<g stroke="#5c5c5c" stroke-width=".7">
<path d="M333.500 115V368M340.700 130V368M347.300 115V368M511.700 130V368M519 115V368M527 115V368"/>
<path d="M347 140h30M347 195h30M347 215h30M347 227h30M347 270h30M347 290h30M496 140h20M496 216h20M496 290h20"/>
<path d="M286 155.700H378M286 189.300H378M286 221H378M286 266.700H378M286 297H378M482 146H577M482 176.500H577M482 198H577M482 259H577M482 298H577"/>
<path d="M371 255V283M368 255h4"/>
</g>
<g fill="#b0b0b0" font-size="3.600">
<text x="286" y="154.500">SƠN GIẢ ĐÁ 1 ĐEN NHÀ TRẮNG</text>
<text x="286" y="188">MIẾN TƯỜNG SƠN NƯỚC MÀU</text><text x="286" y="193.500">KEM TỰ TIÊN THUỘC</text>
<text x="286" y="220">ỐP GẠCH TRANG TRÍ 300</text><text x="286" y="225">MÀU XÁM</text>
<text x="286" y="265">ỐP GẠCH TRANG TRÍ 300</text><text x="286" y="270">BÓN CÂY XANH</text>
<text x="286" y="296">ỐP GẠCH TRANG TRÍ</text><text x="286" y="303">MÀU XÁM</text>
<g text-anchor="end">
<text x="577" y="145">ỐP GẠCH TRANG TRÍ 300</text><text x="577" y="150">MÀU XÁM</text>
<text x="577" y="175">MIẾN TƯỜNG SƠN MÀU</text><text x="577" y="180">KEM TỰ TIÊN</text>
<text x="577" y="197">ỐP GẠCH TRANG TRÍ 300</text><text x="577" y="202">MÀU XÁM</text>
<text x="577" y="258">SƠN ĐÁ TRẮNG 1 LỚP MÀU</text><text x="577" y="263">MÀU XÁM</text>
<text x="577" y="297">ỐP GẠCH TRANG TRÍ</text><text x="577" y="303">MÀU XÁM</text>
</g></g>
<g fill="#8d6d50" font-size="3.800" text-anchor="middle">
<text transform="translate(346 125) rotate(-90)">800</text><text transform="translate(346 137) rotate(-90)">300</text><text transform="translate(346 168) rotate(-90)">3450</text><text transform="translate(337 170) rotate(-90)">3600</text><text transform="translate(346 201) rotate(-90)">450</text><text transform="translate(346 213) rotate(-90)">300</text><text transform="translate(346 222) rotate(-90)">300</text><text transform="translate(346 249) rotate(-90)">1950</text><text transform="translate(337 246) rotate(-90)">3450</text><text transform="translate(330 240) rotate(-90)">7300</text><text transform="translate(346 276) rotate(-90)">300</text><text transform="translate(346 288) rotate(-90)">300</text><text transform="translate(346 327) rotate(-90)">3450</text><text transform="translate(337 323) rotate(-90)">2800</text><text transform="translate(369 269) rotate(-90)">1350</text>
<text transform="translate(517 124) rotate(-90)">800</text><text transform="translate(510 137) rotate(-90)">300</text><text transform="translate(510 175) rotate(-90)">3450</text><text transform="translate(510 212) rotate(-90)">450</text><text transform="translate(517 211) rotate(-90)">1450</text><text transform="translate(525 239) rotate(-90)">7300</text><text transform="translate(510 249) rotate(-90)">1950</text><text transform="translate(510 287) rotate(-90)">300</text><text transform="translate(510 327) rotate(-90)">3450</text><text transform="translate(517 327) rotate(-90)">2800</text><text transform="translate(510 365) rotate(-90)">300</text>
</g>
<g fill="#ddd" font-size="5" font-weight="700" text-anchor="middle">
<text x="262.500" y="110">+11.350</text><path d="M258 111h9l-4.500 4z"/>
<text x="262.500" y="127">+10.350</text><path d="M258 128h9l-4.500 4z"/>
<text x="262.500" y="202">+6.450</text><path d="M258 203h9l-4.500 4z"/>
<text x="262.500" y="278">+3.150</text><path d="M258 279h9l-4.500 4z"/>
<text x="247" y="357">±0.000</text><path d="M241 358h12l-6 4z"/>
<text x="261" y="362">-0.300</text><path d="M256 363h10l-5 4z"/>
<text x="613" y="127">+10.350</text><path d="M609 128h9l-4.500 4z"/>
<text x="613" y="202">+6.450</text><path d="M609 203h9l-4.500 4z"/>
<text x="613" y="278">+3.150</text><path d="M609 279h9l-4.500 4z"/>
<text x="613" y="357">±0.000</text><path d="M607 358h12l-6 4z"/>
<text x="627" y="362">-0.300</text><path d="M622 363h10l-5 4z"/>
</g>
<rect x="382" y="120" width="100" height="144" fill="url(#bri)"/>
<path d="M377 115H440V132H435V120H382V283H377Z" fill="#9b9b9b"/>
<rect x="410" y="132" width="72" height="83" fill="#000" stroke="#6b5a3c" stroke-width=".7"/>
<path d="M410 140.500H482M410 207H482" stroke="#8a6a36" stroke-width=".8"/>
<rect x="440" y="141" width="29" height="11" fill="url(#hat)"/><rect x="440" y="195" width="29" height="12" fill="url(#hat)"/>
<g fill="none" stroke="#8e5c22">
<rect x="390.500" y="152.500" width="13" height="43" stroke-width="1.500"/><path d="M391 184h12" stroke-width="1.300"/><path d="M394 178l3-20 3 20z" stroke-width=".7"/>
<rect x="440.500" y="152.500" width="29" height="41" stroke-width="1.500"/><path d="M455 153v31M441 184h28M441 185.500h28" stroke-width="1.300"/><path d="M448 156l-6 12 6 12 6-12zM462 156l-6 12 6 12 6-12z" stroke-width=".6"/>
<rect x="412.500" y="227.500" width="28" height="30" stroke-width="1.500"/><path d="M427 228v26M413 255h27" stroke-width="1.300"/><path d="M419 231l-5 11 5 11 6-11zM433 231l-5 11 5 11 6-11z" stroke-width=".6"/>
<rect x="453.500" y="227.500" width="19" height="36" stroke-width="1.500"/>
</g>
<rect x="456" y="231" width="13" height="33" fill="#000"/>
<path d="M456 231h13" stroke="#d8d0c0"/><path d="M456 231v33M469 231v33" stroke="#ddd" stroke-width=".6"/>
<rect x="480" y="215" width="2" height="49" fill="url(#grd)"/>
<rect x="383" y="255" width="28" height="28" fill="url(#lat)"/>
<rect x="411" y="264" width="67" height="19" fill="#8f5340"/>
<path d="M411 267h67M411 271h67M411 275h67M411 279h67" stroke="#bd7a65" stroke-width=".8"/>
<path d="M411 264V283M478 264V283" stroke="#555"/>
<path d="M478 262h4v21h-4z" fill="#9b9b9b"/>
<rect x="377" y="283" width="105" height="8" fill="#9b9b9b"/>
<rect x="377" y="291" width="105" height="70" fill="url(#sto)"/>
<g fill="#0a0805" stroke="#8e5c22">
<rect x="385.500" y="301.500" width="59" height="60" stroke-width="1.300"/>
<rect x="387" y="304" width="27" height="7" stroke-width="1"/><rect x="416" y="304" width="27" height="7" stroke-width="1"/>
<rect x="388" y="315" width="11" height="45"/><rect x="401" y="315" width="13" height="45"/><rect x="416" y="315" width="13" height="45"/><rect x="431" y="315" width="11" height="45"/>
<rect x="452.500" y="301.500" width="22" height="60" stroke-width="1.300"/><rect x="455" y="304" width="17" height="7"/><rect x="456" y="315" width="15" height="45"/>
</g>
<g fill="none" stroke="#77532a" stroke-width=".6">
<path d="M393 316l-4 22 4 21 5-21zM407 316l-5 22 5 21 6-21zM422 316l-5 22 5 21 6-21zM436 316l-4 22 4 21 5-21z"/>
<path d="M459 319h9M459 322h9M459 325h9M459 328h9M459 331h9M459 334h9M459 337h9M459 340h9M459 343h9M459 346h9M459 349h9M459 352h9"/>
</g>
<path d="M420.700 112V362" stroke="#7c7c7c" stroke-width=".8" stroke-dasharray="12 2 2 2"/>
<path d="M379.600 95V400M479.600 95V400" stroke="#8d8d8d" stroke-width=".7" stroke-dasharray="8 3"/>
<g stroke="#777" stroke-width=".6"><path d="M376 101H484M376 109H484M376 381H484M376 387H484M380 100v9M417 105v5M472 105v5M480 100v9M385 378v6M449 378v6M453 378v6M472 378v6"/></g>
<g fill="#a88f72" font-size="3.800" text-anchor="middle"><text x="428" y="100">8450</text><text x="407" y="107">2450</text><text x="459" y="107">1910</text><text x="476" y="107">90</text><text x="382" y="380">250</text><text x="414" y="380">2850</text><text x="448" y="380">250</text><text x="462" y="380">1510</text><text x="476" y="380">250</text><text x="429" y="386">8450</text></g>
<g fill="#2a0505" stroke="#c01515" stroke-width="1"><circle cx="380" cy="88" r="4.500"/><circle cx="480" cy="88" r="4.500"/><circle cx="379.600" cy="408" r="5"/><circle cx="479.600" cy="408" r="5"/></g>
<g stroke="#c01515" stroke-width=".8"><path d="M374 88h-2M386 88h2M380 82v-2M380 94v2M474 88h-2M486 88h2M480 82v-2M480 94v2M373 408h-2M386 408h2M379.600 401v-2M379.600 415v2M473 408h-2M486 408h2M479.600 401v-2M479.600 415v2"/></g>
<g fill="#d01a1a" font-size="5" font-weight="700" text-anchor="middle"><text x="380" y="90">A</text><text x="480" y="90">B</text><text x="379.600" y="410">A</text><text x="479.600" y="410">B</text></g>
<text x="205" y="424" fill="#e4e4e4" font-size="7.200" font-weight="700" letter-spacing=".3">MẶT ĐỨNG TRỤC A-B</text>
<path d="M205 426H282" stroke="#ddd"/>
<g stroke="#3d7f80" fill="none" stroke-width=".8"><path d="M697.500 70H772.500V446M697.500 70V446M697.500 83.300H772.500M697.500 89.300H772.500M697.500 95.300H772.500M697.500 101.300H772.500M697.500 108H772.500M713 83V108M697.500 156H772.500M697.500 173.700H772.500M697.500 215H772.500M697.500 259H772.500M697.500 288H772.500M697.500 317.700H772.500M697.500 346.700H772.500M697.500 371H772.500M697.500 400H772.500M697.500 425.700H772.500M722 425.700V446M725 425.700V446M750 425.700V446"/></g>
<path d="M190 440.500H224M191 432V446M207 432V446M224 432V446" stroke="#3d8a80" fill="none" stroke-width=".8"/>
<g fill="#ee8a18" font-size="4.200" font-weight="700" text-anchor="middle">
<text x="735" y="75">BÊN GIỚI</text><rect x="728" y="77" width="14" height="1.500"/>
<text x="705" y="88">STT</text><text x="742" y="88">NGÀY BIÊN CHẾ</text>
<text x="705" y="94">1</text><text x="742" y="94">LẦN 1: NGÀY ___/___/20..</text>
<text x="705" y="100">2</text><text x="742" y="100">LẦN 2: NGÀY ___/___/20..</text>
<text x="705" y="106">3</text><text x="742" y="106">LẦN 3: NGÀY ___/___/20..</text>
<text x="735" y="124">CHỦ ĐẦU TƯ</text>
<text x="735" y="132">BÀ LÝ THỊ QUY</text><text x="735" y="138">ĐỊA CHỈ: KHU CẦU HẠC</text><text x="735" y="146">X.BÌNH MINH - TP.BIÊN HÒA</text>
<text x="735" y="163" font-size="6.400" font-weight="400">HỒ SƠ THIẾT KẾ BV</text><text x="735" y="171" font-size="7.500" font-weight="400">THI CÔNG</text>
<text x="735" y="181" font-size="3.600">TỔNG CTY TNHH MTV KHẢO SÁT XÂY DỰNG</text>
<text x="735" y="192" font-size="8.200" font-weight="400">MINH ĐẠT</text>
<rect x="723" y="196" width="48" height="3"/><rect x="727" y="200" width="40" height="2.500"/><rect x="737" y="204" width="18" height="2"/><rect x="725" y="207" width="40" height="3"/>
<text x="734" y="222">GIÁM ĐỐC</text><rect x="728" y="223.500" width="14" height="1.500"/>
<text x="735" y="257">KS. NGUYỄN HỮU ĐƯỢC</text>
<rect x="699" y="263" width="17" height="4"/><text x="707" y="262" font-size="4">CHỦ TRÌ</text>
<text x="735" y="287">KS. NGUYỄN HỮU ĐƯỢC</text>
<rect x="702" y="292" width="12" height="6"/><text x="708" y="291.500" font-size="4">THIẾT</text>
<text x="736" y="316">KS. TRỊNH THIÊN BẢN</text>
<rect x="705" y="322" width="7" height="6"/><text x="708" y="321.500">VẼ</text>
<text x="735" y="345">KS. LÊ VĂN THANH</text>
<text x="708" y="351">KS. KT</text><rect x="698" y="354" width="20" height="1.800"/>
<text x="735" y="370">KS. NGUYỄN TRUNG ĐỨC</text>
<text x="737" y="377">CÔNG ĐỊNH</text><rect x="729" y="378" width="16" height="1.500"/><text x="737" y="388">NHÀ Ở</text><text x="733" y="397">BÀ: NGUYỄN THANH HÒA</text>
<text x="732" y="405">TÊN BẢN VẼ</text><rect x="722" y="406" width="20" height="1.500"/>
<text x="736" y="418" fill="#e8e020">MẶT ĐỨNG</text>
<text x="708" y="429">KHỔ GIẤY</text><rect x="700" y="431" width="18" height="5"/><text x="738" y="429">SỐ LƯỢNG</text><rect x="725" y="431" width="21" height="4"/><text x="762" y="429">BẢN VẼ</text><rect x="750" y="431" width="22" height="4"/>
<text x="713" y="442" font-size="4.500">A4</text><text x="736" y="444">1/50</text><text x="761" y="444" font-size="5">KT-05</text><rect x="697" y="441" width="6" height="5"/>
<rect x="212" y="432" width="6" height="5"/><text x="215" y="444">ĐƯỜNG</text><text x="237" y="444">5.100</text>
</g>
<g fill="#1f9c9c"><path d="M698 209l9-14 5 0-9 14zM707 209l6-9 3 0 1 9zM716 195h4c3 4 2 12-3 14l-1-3c3-2 3-6 1-9z"/></g>
<text x="698" y="213.500" fill="#1f9c9c" font-size="3.700" font-weight="700">MINH ĐẠT</text>
<g fill="none" stroke="#a428c0" stroke-width=".8">
<path d="M710 250L770 229M716 246l9-8 8 3-4 7-10 2 8-12M726 238l11 9-14 3"/>
<path d="M716 282l4-17 2 9 4-1 2 6 5-7 0 8 4-3 2-1 29-17M718 266c4 6 6 12 12 15"/>
<path d="M716 312V297M717 297l3 5h15l14 3-14 3-14 2 11-5"/>
<path d="M722 331c1-4 6-8 6-2l2 5 3 7 5-6 5-3c1-4 4-6 4-9M746 330l16-5M722 331l10 3"/>
<path d="M726 364l6-14c4 2 6 6 9 6 2-2 4-3 7-2l25-11M728 352l4 12 12-5"/>
</g>
<path d="M17 441.500H933" stroke="#9a9a9a"/><path d="M860.500 62V446" stroke="#9a9a9a"/>
<rect x="857.500" y="438.500" width="6" height="6" fill="none" stroke="#bbb"/>
<circle cx="198" cy="439" r="5.500" fill="none" stroke="#ddd" stroke-width="1.200" stroke-dasharray="10 3"/>
</svg>

<div class="side"><div class="tbs"><span class="gripH"></span><span class="tbi"><svg><use href="#r1"/></svg></span><span class="tbi"><svg><use href="#r2"/></svg></span><span class="tbi"><svg><use href="#r3"/></svg></span><span class="tbi"><svg><use href="#r4"/></svg></span><span class="tbi"><svg><use href="#r5"/></svg></span><span class="tbi"><svg><use href="#r6"/></svg></span><span class="tbi"><svg><use href="#r7"/></svg></span><span class="tbi"><svg><use href="#r8"/></svg></span><span class="tbi"><svg><use href="#r9"/></svg></span><span class="tbi"><svg><use href="#ra"/></svg></span><span class="tbi"><svg><use href="#rb"/></svg></span><span class="tbi"><svg><use href="#rc"/></svg></span><span class="tbi"><svg><use href="#rd"/></svg></span><span class="tbi"><svg><use href="#re2"/></svg></span><span class="tbi"><svg><use href="#rf"/></svg></span><span class="tbi"><svg><use href="#rg"/></svg></span><span class="tbi"><svg><use href="#rh"/></svg></span>
<span class="gripH mt-2"></span>
<span class="tbi"><svg><use href="#o1"/></svg></span><span class="tbi"><svg><use href="#o2"/></svg></span><span class="tbi"><svg><use href="#o3"/></svg></span><span class="tbi"><svg><use href="#o4"/></svg></span>
</div></div>
</div>

<div class="tabsr d-flex align-items-start">
<span class="navb">|◂</span><span class="navb">◂</span><span class="navb">▸</span><span class="navb me-1">▸|</span>
<span class="tabz on tab-m">Model</span><span class="tabz tab-l">Layout1</span><span class="tabz tab-l2">Layout2</span>
</div>
<div class="gapr"></div>
<div class="cmdr d-flex">
<div class="cmdg"></div>
<div class="cmdw">
<div class="cmdl">Specify opposite corner:<div class="scv">⌃<br>⌄</div></div>
<div class="cmdl">Command:<div class="sch"><span>‹</span><b></b><span>›</span></div></div>
</div></div>
<div class="stb d-flex align-items-center">
<span class="crd">638168.0000, 30183.0000, 0.0000</span>
<span class="sbt s1">SNAP</span><span class="sbt up s2">GRID</span><span class="sbt up s3">ORTHO</span><span class="sbt up s4">POLAR</span><span class="sbt s5">OSNAP</span><span class="sbt s6">OTRACK</span><span class="sbt s7">DUCS</span><span class="sbt s8">DYN</span><span class="sbt up s9">LWT</span><span class="sbt s10">MODEL</span>
<span class="d-flex tray align-items-center"><svg viewBox="0 0 14 14"><path d="M3 2l4 3 4-3-2 5 3 5H2l3-5z" fill="#d9b43a"/><path d="M3 2h5v5" fill="#7aa"/></svg><svg viewBox="0 0 14 14"><path d="M2 7h8v6H2z" fill="#d9a51d"/><path d="M5 7V3c0-3 6-3 6 0v2" fill="none" stroke="#333" stroke-width="1.300"/></svg><svg viewBox="0 0 14 14"><path d="M2 2h8v10H2z" fill="#4a7ea5"/><circle cx="10" cy="10" r="3.500" fill="#4caf50"/></svg><span class="ddn">▾</span><svg class="ms-1" viewBox="0 0 14 14"><path d="M1 1h12v12H1z" fill="#b9d3ec" stroke="#5a8fc0"/></svg></span>
</div>
<div class="tskb d-flex align-items-center">
<span class="tski"><svg viewBox="0 0 15 15"><path d="M2 3l5-.7v4.700H2zM8 2.100l5-.7V7H8zM2 8h5v4.700l-5-.7zM8 8h5v5.600l-5-.7z" fill="#fff"/></svg></span>
<span class="tski"><svg viewBox="0 0 15 15"><circle cx="8.500" cy="6" r="3.800" fill="none" stroke="#dfe5ea"/><path d="M5.800 8.800L2 13" stroke="#dfe5ea"/></svg></span>
<span class="tski"><svg viewBox="0 0 15 15"><circle cx="7.500" cy="7.500" r="4.300" fill="none" stroke="#fff" stroke-width="1.400"/></svg></span>
<span class="tski"><svg viewBox="0 0 15 15"><path d="M2 3h5v9H2zM10 3h3M10 7.500h3M10 12h3" fill="none" stroke="#dfe5ea"/></svg></span>
<span class="tski"><svg viewBox="0 0 15 15"><path d="M1 9C1 3 6 0 10 1c3 1 4 4 4 7H5c0 4 5 5 8 3v3c-5 2-12 0-12-5zm4-3h5c0-3-4-3-5 0z" fill="#1f7fd1"/></svg></span>
<span class="tski run"><svg viewBox="0 0 15 15"><path d="M1 3h5l1 2h7v9H1z" fill="#e7b93e"/><path d="M1 7h13v7H1z" fill="#f4d571"/><path d="M4 9h7v3H4z" fill="#3d8bb9"/></svg></span>
<span class="tski run"><svg viewBox="0 0 15 15"><path d="M2 1.500h11v12H2z" fill="#c9dfd0" stroke="#1e7145"/><path d="M4 4l6 7M10 4l-6 7" stroke="#1e7145" stroke-width="1.800"/></svg></span>
<span class="tski run"><svg viewBox="0 0 15 15"><path d="M1.500 1.500h12v12h-12z" fill="#3a5fb0"/><path d="M3 4l1.500 7L6.500 6l2 5L11 4" fill="none" stroke="#fff" stroke-width="1.300"/></svg></span>
<span class="tski run"><svg viewBox="0 0 15 15"><circle cx="7" cy="8" r="6" fill="#6fb84a"/><circle cx="7" cy="8" r="3" fill="#fff"/><circle cx="7" cy="8" r="1.700" fill="#6fb84a"/><path d="M11 1l1 2 2 0-1 1.500.5 2-2-1-2 1 .5-2-1-1.500h2z" fill="#e9c46a"/></svg></span>
<span class="tski run"><svg viewBox="0 0 15 15"><circle cx="7.500" cy="7.500" r="7" fill="#e9f2fb"/><path d="M2 10c-1-5 3-8 6-8 4 0 6 3 5 7-1 3-6 4-9 3z" fill="#1b7fe0"/><text x="7.500" y="9.500" font-size="5" fill="#fff" text-anchor="middle">Zalo</text></svg></span>
<span class="tski act run"><svg viewBox="0 0 15 15"><path d="M0 0h15v15H0z" fill="#dff0ec"/><path d="M2 13L6 2h1v11M3 9h4" fill="none" stroke="#167a6c" stroke-width="1.400"/><path d="M9 2l4 11" stroke="#167a6c" stroke-width="1.200"/></svg></span>
<span class="tski run"><svg viewBox="0 0 15 15"><path d="M2 2h11v11H2z" fill="#7ea8c2"/><path d="M3.500 3.500h8v8h-8z" fill="#e58c3a"/><path d="M6 5l4 2.500L6 10z" fill="#fff"/></svg></span>
<span class="tski run"><svg viewBox="0 0 15 15"><path d="M7 1.500c4-1 7 2 6 5-.5 2-3 1-4 2s.5 2-.5 3.500c-2 2-6 0-7-3-.8-3 2-7 5.500-7.500z" fill="#cfc7b0"/><circle cx="5" cy="5" r="1.300" fill="#3c7bc0"/><circle cx="9" cy="4" r="1.300" fill="#c53"/><circle cx="4" cy="9" r="1.300" fill="#5a4"/></svg></span>
<span class="d-flex align-items-center ms-auto">
<span class="try d-flex align-items-center"><svg viewBox="0 0 14 14"><path d="M2 9l5-5 5 5" fill="none" stroke="#e7ebef"/></svg><svg viewBox="0 0 14 14"><path d="M1 4h10v6H1z" fill="#dfe5ea"/><path d="M11 6h2v2h-2z" fill="#dfe5ea"/></svg><svg viewBox="0 0 14 14"><path d="M1 12c0-6 4-10 11-10M4 12c0-4 3-7 8-7M7 12c0-2 2-4 5-4" fill="none" stroke="#aeb8c0"/></svg><svg viewBox="0 0 14 14"><path d="M2 5h2l3-3v10L4 9H2zM9 5c1 1 1 3 0 4M11 3c2 2 2 6 0 8" fill="none" stroke="#dfe5ea"/></svg><span class="ms-1 me-2">ENG</span></span>
<span class="clk"><div class="pe-1">7:09 SA</div><div>30/03/2020</div></span>
<svg class="ntf" width="17" height="17" viewBox="0 0 17 17"><path d="M2 2h10v9H6l-2 2v-2H2z" fill="#f0f4f7"/><path d="M4 5h6M4 7.500h6" stroke="#2a3a48"/><circle cx="11.500" cy="11.500" r="4.300" fill="#222"/><circle cx="11.500" cy="11.500" r="4" fill="none" stroke="#dde"/><text x="11.500" y="14" font-size="7" fill="#fff" text-anchor="middle">3</text></svg>
</span>
</div>
<svg class="lgo" viewBox="855 12 85 39">
<path d="M856 27H938V50H856Z" fill="#fff"/>
<path d="M885 26L887 28 905 18 910 25 920 15 938 29V33H884Z" fill="#fff" opacity=".9"/>
<path d="M888 27L903 20 908 25 920 14 938 28" fill="none" stroke="#ee7a1c" stroke-width="1.300"/>
<g font-weight="700">
<text transform="translate(858 47.500) scale(.53 1)" font-size="23" fill="#ee7a1c">KHO</text>
<text transform="translate(886 47.500) scale(.6 1)" font-size="23" fill="#222b36">BÁNVÊ</text>
</g>
</svg>
<div class="wm1">KhoBanVe.vn</div>
<div class="wm2">Copyright © KhoBanVe.vn</div>
</div>
</body></html>
